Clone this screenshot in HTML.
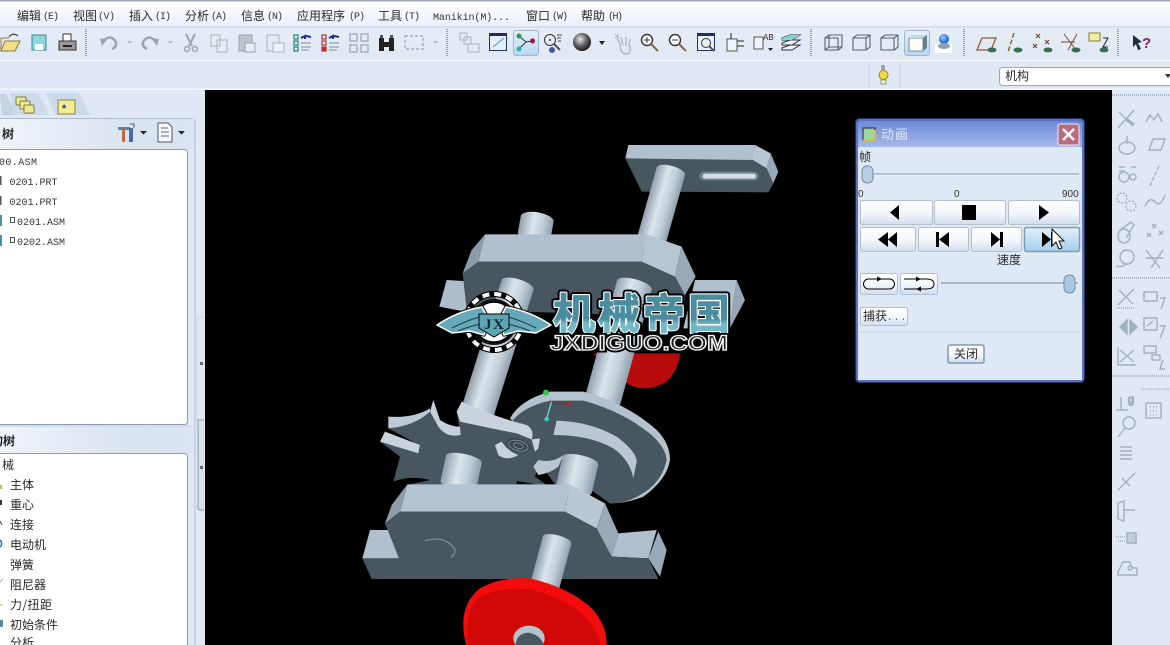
<!DOCTYPE html>
<html><head><meta charset="utf-8"><style>
html,body{margin:0;padding:0;background:#dfe8f4;width:1170px;height:645px;overflow:hidden}
svg{display:block}
text{font-family:"Liberation Sans","WenQuanYi Zen Hei","Noto Sans CJK SC",sans-serif;font-size:12px;fill:#222}
.m{font-family:"Liberation Mono","WenQuanYi Zen Hei",monospace;font-size:10px;fill:#333}
.z{font-family:"WenQuanYi Zen Hei","Noto Sans CJK SC",sans-serif;font-size:12px;fill:#2a2a2a}
</style></head><body>
<svg width="1170" height="645" viewBox="0 0 1170 645" xmlns="http://www.w3.org/2000/svg">
<defs>
<linearGradient id="menu" x1="0" y1="0" x2="0" y2="1"><stop offset="0" stop-color="#fff"/><stop offset="1" stop-color="#e9eff8"/></linearGradient>
<linearGradient id="tb" x1="0" y1="0" x2="0" y2="1"><stop offset="0" stop-color="#e6edf6"/><stop offset="1" stop-color="#dfe8f3"/></linearGradient>
<linearGradient id="hdr" x1="0" y1="0" x2="1" y2="0"><stop offset="0" stop-color="#eef3f9"/><stop offset=".7" stop-color="#d8e3f0"/><stop offset="1" stop-color="#dbe5f1"/></linearGradient>
<linearGradient id="shaft" x1="0" y1="0" x2="1" y2="0"><stop offset="0" stop-color="#909fae"/><stop offset=".4" stop-color="#dde5ec"/><stop offset=".7" stop-color="#c0cdd8"/><stop offset="1" stop-color="#8f9fae"/></linearGradient>
<linearGradient id="btn" x1="0" y1="0" x2="0" y2="1"><stop offset="0" stop-color="#fff"/><stop offset=".55" stop-color="#f2f6fb"/><stop offset="1" stop-color="#cfdcec"/></linearGradient>
<linearGradient id="btnh" x1="0" y1="0" x2="0" y2="1"><stop offset="0" stop-color="#e4f0fb"/><stop offset="1" stop-color="#a5cdec"/></linearGradient>
<linearGradient id="title" x1="0" y1="0" x2="0" y2="1"><stop offset="0" stop-color="#6f8ad6"/><stop offset=".5" stop-color="#8ba3e2"/><stop offset="1" stop-color="#a8bbe8"/></linearGradient>
<linearGradient id="sel" x1="0" y1="0" x2="0" y2="1"><stop offset="0" stop-color="#e8f1f9"/><stop offset="1" stop-color="#b9d7f0"/></linearGradient>
<linearGradient id="lt" x1="0" y1="0" x2="0" y2="1"><stop offset="0" stop-color="#4a8da0"/><stop offset=".62" stop-color="#4a8da0"/><stop offset=".7" stop-color="#74b8c6"/><stop offset="1" stop-color="#74b8c6"/></linearGradient>
<radialGradient id="ball" cx=".4" cy=".35" r=".7"><stop offset="0" stop-color="#e8e8e8"/><stop offset=".5" stop-color="#666"/><stop offset="1" stop-color="#111"/></radialGradient>
<radialGradient id="bb" cx=".4" cy=".35" r=".7"><stop offset="0" stop-color="#8cc8ff"/><stop offset="1" stop-color="#0a50c8"/></radialGradient>
</defs>

<!-- chrome -->
<rect width="1170" height="645" fill="#dfe8f4"/>
<rect y="0" width="1170" height="1.5" fill="#9aa3b8"/>
<rect y="1.5" width="1170" height="25" fill="url(#menu)"/>
<rect y="26.5" width="1170" height="1" fill="#c6d2e0"/>
<rect y="27.5" width="1170" height="32" fill="url(#tb)"/>
<rect y="60" width="1170" height="1" fill="#f8fbff"/>
<rect y="61" width="1170" height="28" fill="#dfe8f4"/>
<rect y="88.5" width="1170" height="1.5" fill="#f4f7fb"/>

<!-- menu -->
<g class="z">
<text class="z" x="-4" y="20">)</text>
<text class="z" x="17" y="20" textLength="24">编辑</text><text class="m" x="43" y="19" textLength="16">(E)</text>
<text class="z" x="73" y="20" textLength="24">视图</text><text class="m" x="98" y="19" textLength="17">(V)</text>
<text class="z" x="129" y="20" textLength="24">插入</text><text class="m" x="155" y="19" textLength="16">(I)</text>
<text class="z" x="185" y="20" textLength="24">分析</text><text class="m" x="211" y="19" textLength="16">(A)</text>
<text class="z" x="241" y="20" textLength="24">信息</text><text class="m" x="267" y="19" textLength="16">(N)</text>
<text class="z" x="297" y="20" textLength="48">应用程序</text><text class="m" x="349" y="19" textLength="16">(P)</text>
<text class="z" x="378" y="20" textLength="24">工具</text><text class="m" x="404" y="19" textLength="16">(T)</text>
<text class="m" x="433" y="20" textLength="77">Manikin(M)...</text>
<text class="z" x="526" y="20" textLength="24">窗口</text><text class="m" x="552" y="19" textLength="16">(W)</text>
<text class="z" x="581" y="20" textLength="24">帮助</text><text class="m" x="608" y="19" textLength="15">(H)</text>
</g>

<!-- toolbar separators -->
<g stroke="#8fa0ae" stroke-dasharray="1 1" stroke-width="2" fill="none">
<path d="M86 29V56M447 29V56M811 29V56M964 29V56M1118 29V56"/>
</g>
<!-- highlighted tool bg -->
<rect x="513.5" y="30.5" width="25" height="25" rx="3" fill="url(#sel)" stroke="#a3b6c9"/>
<rect x="904.5" y="30.5" width="25" height="25" rx="3" fill="url(#sel)" stroke="#a3b6c9"/>

<!-- open -->
<path d="M1 51L5 41H20L15 51Z" fill="#f4de8a" stroke="#8a7b3c"/><path d="M1 51V38H9" fill="none" stroke="#8a7b3c"/>
<path d="M9 37Q13 32 18 36" stroke="#222" fill="none"/>
<!-- save -->
<rect x="32" y="35" width="14" height="15" fill="#8fd6dc" stroke="#3b8a92"/><rect x="35" y="44" width="8" height="6" fill="#fff"/>
<!-- print -->
<rect x="63" y="34" width="8" height="8" fill="#fff" stroke="#333"/><rect x="59" y="41" width="17" height="9" fill="#999" stroke="#333"/><rect x="63" y="45" width="9" height="2" fill="#222"/>
<!-- undo redo -->
<path d="M103 42Q110 33 116 42Q117 47 112 49" fill="none" stroke="#9aa4ae" stroke-width="2.5"/><path d="M100 39L108 38L102 46Z" fill="#9aa4ae"/>
<path d="M156 42Q149 33 143 42Q142 47 147 49" fill="none" stroke="#9aa4ae" stroke-width="2.5"/><path d="M159 39L151 38L157 46Z" fill="#9aa4ae"/>
<path d="M127 41h5l-2.5 3zM168 41h5l-2.5 3zM433 41h5l-2.5 3z" fill="#b4bec8"/>
<!-- cut -->
<path d="M186 34L192 46M195 34L189 46" stroke="#98a4ae" stroke-width="2" fill="none"/><circle cx="187" cy="49" r="2.5" fill="none" stroke="#98a4ae" stroke-width="1.5"/><circle cx="195" cy="49" r="2.5" fill="none" stroke="#98a4ae" stroke-width="1.5"/>
<!-- copy -->
<path d="M211 35h9v11h-9zM217 40h10v12h-10z" fill="#e6ebf1" stroke="#a8b2bc"/>
<!-- paste -->
<rect x="239" y="35" width="13" height="16" fill="#bcc5cd" stroke="#97a2ac"/><rect x="245" y="43" width="10" height="9" fill="#e8ecf2" stroke="#97a2ac"/>
<rect x="267" y="35" width="12" height="16" fill="#e4e9f0" stroke="#aab4be"/><rect x="273" y="43" width="11" height="9" fill="#eef1f6" stroke="#aab4be"/>
<!-- regen list icons -->
<g fill="none" stroke-width="1.3">
<rect x="294" y="35" width="4" height="4" stroke="#2c8a78"/><rect x="294" y="41" width="4" height="4" stroke="#2c8a78"/><rect x="294" y="47" width="4" height="4" stroke="#2c8a78"/>
<path d="M301 43h10M301 47h10M301 50h8" stroke="#8fa0ae"/><path d="M301 38l4-2 0 3M306 36l5 1" stroke="#1a2f80" stroke-width="2"/>
<rect x="322" y="35" width="4" height="4" stroke="#b04040"/><rect x="322" y="41" width="4" height="4" stroke="#b04040"/><rect x="322" y="47" width="4" height="4" fill="#d02030" stroke="#b04040"/>
<path d="M329 43h10M329 47h10M329 50h8" stroke="#8fa0ae"/><path d="M329 38l4-2 0 3M334 36l5 1" stroke="#1a2f80" stroke-width="2"/>
</g>
<!-- grid faded -->
<path d="M350 34h7v7h-7zM361 34h7v7h-7zM350 45h7v7h-7zM361 45h7v7h-7z" fill="none" stroke="#a9b3bc" stroke-width="1.5"/>
<!-- binoculars -->
<path d="M379 38h5v13h-5zM389 38h5v13h-5zM384 42h5v5h-5z" fill="#222"/><path d="M380 35h3v3h-3zM390 35h3v3h-3z" fill="#555"/>
<!-- dashed rect -->
<rect x="405" y="36" width="18" height="13" fill="none" stroke="#a6b1bb" stroke-width="1.5" stroke-dasharray="3 2"/>
<!-- group faded -->
<path d="M460 33h7v7h-7zM464 37h7v7h-7zM468 44h11v8h-11z" fill="none" stroke="#a9b3bc"/>
<!-- named view -->
<rect x="489.5" y="33.5" width="17" height="17" fill="#e6eef8" stroke="#1e3060"/><rect x="489" y="33" width="18" height="3" fill="#1e3060"/><path d="M493 47L504 38" stroke="#4a90b0"/>
<!-- mech connect -->
<g stroke="#333" fill="none"><path d="M519 36L526 42L519 49M526 42L532 41"/></g>
<circle cx="519" cy="36" r="2.5" fill="#2a9a50"/><circle cx="519" cy="49" r="2.5" fill="#2ab0b0"/><circle cx="532.5" cy="41" r="2.5" fill="#a01840"/>
<!-- view icon -->
<circle cx="550" cy="40" r="5.5" fill="none" stroke="#333"/><circle cx="550" cy="40" r="1" fill="#333"/><path d="M554 44l6 6" stroke="#555" stroke-width="2"/><circle cx="552" cy="50" r="3" fill="#3a5aa0"/><path d="M557 35h5M557 38h4M558 41h3" stroke="#444"/>
<!-- sphere -->
<circle cx="582" cy="42" r="9" fill="url(#ball)"/><path d="M599 41h6l-3 4z" fill="#222"/>
<!-- hand -->
<path d="M617 38l4 8M621 37l2 8M626 37l0 9M630 39l-1 8M620 46q1 8 6 8q5 0 4-8" fill="none" stroke="#adb8c2" stroke-width="1.4"/><path d="M615 34l4 4M619 34l-4 4" stroke="#adb8c2"/>
<!-- zoom in/out -->
<circle cx="647" cy="40" r="5.5" fill="#fff" stroke="#333" stroke-width="1.4"/><path d="M644 40h6M647 37v6" stroke="#333"/><path d="M651 44l7 7" stroke="#7a6a50" stroke-width="2"/>
<circle cx="675" cy="40" r="5.5" fill="#fff" stroke="#333" stroke-width="1.4"/><path d="M672 40h6" stroke="#333"/><path d="M679 44l7 7" stroke="#7a6a50" stroke-width="2"/>
<!-- refit -->
<rect x="697.5" y="33.5" width="17" height="17" fill="#eaf0f8" stroke="#1e3060"/><rect x="697" y="33" width="18" height="3" fill="#1e3060"/><circle cx="706" cy="43" r="4.5" fill="none" stroke="#333"/><path d="M709 46l5 5" stroke="#555" stroke-width="2"/>
<!-- orient -->
<path d="M727 39h10v12h-10z" fill="#eef3f8" stroke="#555"/><path d="M731 33v6M744 41h-7M744 46h-7" stroke="#222"/>
<!-- saved view -->
<path d="M754 37h9v12h-9z" fill="#eef3f8" stroke="#555"/><text x="763" y="40" class="m" style="font-size:9px">AB</text><path d="M768 48h5l-2.5 3z" fill="#222"/>
<!-- layers -->
<path d="M782 38l8-3 10 0-8 5h-10zM782 43l8-3h10l-8 5h-10zM782 48l8-3h10l-8 5h-10z" fill="#e8f4f4" stroke="#334"/><path d="M782 38l8-3 10 0-8 5h-10z" fill="#7fd8d0"/>

<!-- box views -->
<g fill="none" stroke="#556370" stroke-width="1.1">
<path d="M825 38h13v12h-13zM825 38l4-3h13v12l-4 3M829 35v12h13M829 47l-4 3"/>
<path d="M853 38h13v12h-13zM853 38l4-3h13v12l-4 3M866 38l4-3"/>
<path d="M881 38h13v12h-13zM881 38l4-3h13v12l-4 3M894 38l4-3"/>
</g>
<path d="M909 38h14v13h-14z" fill="#fff" stroke="#6a8a9a"/><path d="M909 38l4-3h14l-4 3z" fill="#b8dde8"/><path d="M923 38l4-3v13l-4 3z" fill="#6a8088"/>
<!-- named blue -->
<circle cx="944" cy="39" r="5" fill="url(#bb)"/><path d="M935 44h17v9h-17z" fill="#fff"/><ellipse cx="944" cy="46" rx="6" ry="3" fill="#8fa0ae"/>
<!-- datum toggles -->
<path d="M977 50l5-12h14l-5 12z" fill="none" stroke="#8a5a3a" stroke-width="1.3"/>
<path d="M1014 33l-6 19" stroke="#8a5a3a" stroke-width="1.4" stroke-dasharray="5 2"/>
<path d="M1036 34l4 4M1040 34l-4 4M1033 44l4 4M1037 44l-4 4M1045 40l4 4M1049 40l-4 4" stroke="#6a3a30"/>
<path d="M1064 34l12 16M1077 34l-9 16M1061 42h14" stroke="#7a4a3a"/>
<rect x="1089" y="33" width="11" height="8" fill="#f4f0a0" stroke="#8a7a40"/><path d="M1103 38h5l-5 9h5" stroke="#222" fill="none"/>
<g fill="#3a6a58"><ellipse cx="992" cy="50" rx="4.5" ry="2.5"/><ellipse cx="1018" cy="50" rx="4.5" ry="2.5"/><ellipse cx="1048" cy="50" rx="4.5" ry="2.5"/><ellipse cx="1076" cy="50" rx="4.5" ry="2.5"/><ellipse cx="1104" cy="50" rx="4.5" ry="2.5"/></g>
<!-- help -->
<path d="M1133 35l9 7-4 1 3 6-3 1-2-6-3 3z" fill="#1e2c3c"/><text x="1142" y="48" style="font-size:15px;font-weight:bold;fill:#8a1a70">?</text>

<!-- status bar row -->
<path d="M869 63V88M900 63V88" stroke="#c4cfdc"/>
<rect x="881" y="65" width="4" height="5" fill="#b89ab0"/><circle cx="883.5" cy="75" r="4.5" fill="#f0dc40" stroke="#8a8a30"/><rect x="881" y="80" width="5" height="4" fill="#f4f4c8" stroke="#6a7a50" stroke-width=".7"/>
<rect x="999.5" y="67.5" width="180" height="18" rx="3" fill="#fff" stroke="#9aa8b8"/>
<text class="z" x="1005" y="80" textLength="24">机构</text>
<path d="M1165 74h6l-3 4z" fill="#333"/>

<!-- left panel -->
<path d="M2 115L0 94H6L18 115Z" fill="#c6d3e2"/>
<path d="M10 93H34Q38 93 42 100L49 115H14Z" fill="#cddaea"/>
<path d="M46 93H76Q80 93 83 100L90 115H55Z" fill="#cddaea"/>
<g stroke="#7a7a40"><rect x="16" y="97" width="10" height="8" rx="1" fill="#f0e890"/><rect x="20" y="101" width="10" height="8" rx="1" fill="#f0e890"/><rect x="24" y="105" width="10" height="8" rx="1" fill="#f0e890"/></g>
<rect x="58" y="100" width="17" height="14" fill="#f4ec90" stroke="#8a8240"/><text x="62" y="112" style="font-size:11px;fill:#223a90;font-weight:bold">*</text>
<path d="M0 118.5H190Q195 118.5 195 123V645" fill="none" stroke="#aebbca"/>
<rect x="0" y="119" width="194" height="30" fill="url(#hdr)"/>
<rect x="0" y="427" width="194" height="26" fill="url(#hdr)"/>
<path d="M0 426H194" stroke="#c5d1df"/>
<text x="2" y="138" style="font-weight:bold;font-size:12px;font-family:'WenQuanYi Zen Hei','Noto Sans CJK SC',sans-serif">树</text>
<text x="-9" y="445" style="font-weight:bold;font-size:12px;font-family:'WenQuanYi Zen Hei','Noto Sans CJK SC',sans-serif">构树</text>
<!-- header icons -->
<path d="M118 127h12v3h-12z" fill="#6a8090"/><rect x="122" y="129" width="3" height="13" fill="#c06a40"/><rect x="129" y="128" width="4" height="14" fill="#4a6aa8"/><path d="M130 124l4 0 0 4" fill="none" stroke="#556"/>
<path d="M140 131h7l-3.500 3.500zM178 131h7l-3.500 3.500z" fill="#222"/>
<path d="M158 123h10l4 4v15h-14z" fill="#f4f6f8" stroke="#556"/><path d="M161 128h7M161 132h8M161 136h8" stroke="#668"/>
<!-- lists -->
<rect x="-3" y="149.500" width="190.500" height="275" rx="3" fill="#fff" stroke="#8e9cac"/>
<rect x="-3" y="453.500" width="190.500" height="200" rx="3" fill="#fff" stroke="#8e9cac"/>
<g class="m">
<text class="m" x="-1" y="165" textLength="38">00.ASM</text>
<text class="m" x="9.500" y="185" textLength="48">0201.PRT</text>
<text class="m" x="9.500" y="205" textLength="48">0201.PRT</text>
<text class="m" x="17" y="225" textLength="48">0201.ASM</text>
<text class="m" x="17" y="245" textLength="48">0202.ASM</text>
</g>
<path d="M0 176h1.500v9H0zM0 196h1.500v9H0z" fill="#555"/>
<path d="M0 215h2v11H0zM0 235h2v11H0z" fill="#4a90a8"/>
<path d="M10.500 217.500h4v5h-4zM10.500 237.500h4v5h-4z" fill="none" stroke="#555"/>
<text class="z" x="2" y="469">械</text>
<text class="z" x="10" y="489" textLength="24">主体</text>
<text class="z" x="10" y="509" textLength="24">重心</text>
<text class="z" x="10" y="529" textLength="24">连接</text>
<text class="z" x="10" y="549" textLength="36">电动机</text>
<text class="z" x="10" y="569" textLength="24">弹簧</text>
<text class="z" x="10" y="589" textLength="36">阻尼器</text>
<text class="z" x="10" y="609" textLength="42">力/扭距</text>
<text class="z" x="10" y="629" textLength="48">初始条件</text>
<text class="z" x="10" y="647" textLength="24">分析</text>
<path d="M0 485h2v4H0z" fill="#c8b860"/><path d="M0 500h2v5H0z" fill="#333"/><path d="M0 521l2 4" stroke="#444"/><path d="M0 540a3 4 0 0 1 0 7" stroke="#2a70b0" fill="none" stroke-width="1.500"/><path d="M0 582l3-3" stroke="#aaa"/><path d="M0 605h3" stroke="#c8b060"/><path d="M0 620h3v7H0z" fill="#5a8a98"/>
<!-- sash -->
<path d="M204 317H200Q197 317 197 321V420" fill="none" stroke="#ccd7e4"/>
<path d="M204 420H198V508Q198 510 200 510H204" fill="#d6e0ec" stroke="#8d9bab"/>
<rect x="200" y="362" width="3" height="3" fill="#667"/><rect x="200" y="466" width="3" height="3" fill="#667"/>

<!-- viewport -->
<rect x="205" y="90" width="907" height="555" fill="#000"/>
<clipPath id="vp"><rect x="205" y="90" width="907" height="555"/></clipPath>

<g clip-path="url(#vp)">
<!-- UPPER MODEL: coordinates are 3x, offset 350,130 -->
<g transform="translate(350,130) scale(.33333)">
<!-- back red -->
<path d="M730,670 L990,670 Q985,720 950,755 Q900,785 850,770 Q790,740 730,670Z" fill="#b80c0c"/>
<!-- stub -->
<rect x="-50" y="0" width="100" height="90" rx="50" ry="20" fill="url(#shaft)" transform="translate(565,247) rotate(10)"/>
<!-- bracket -->
<path d="M826,85 L1205,88 L1250,115 L1270,160 L1255,187 L875,185Z" fill="#47565f"/>
<path d="M835,45 L1215,45 L1205,90 L826,85Z" fill="#b1c0ce"/>
<path d="M1215,45 L1262,70 L1250,115 L1205,88Z" fill="#b8c6d3"/>
<path d="M1262,70 L1285,125 L1270,160 L1250,115Z" fill="#98a9b7"/>
<rect x="1048" y="125" width="178" height="26" rx="13" fill="#6f808c"/>
<rect x="1058" y="131" width="160" height="15" rx="7" fill="#d3dce4"/>
<!-- top shaft -->
<rect x="-44" y="0" width="88" height="260" rx="44" ry="16" fill="url(#shaft)" transform="translate(967,108) rotate(15.700)"/>
<!-- flange tabs -->
<path d="M290,450 L370,455 L345,545 L268,530Z" fill="#aebdcb"/>
<path d="M1035,450 L1160,450 L1140,595 L1000,595Z" fill="#b1c0ce"/>
<path d="M1160,450 L1185,510 L1140,595Z" fill="#96a7b5"/>
<!-- middle block -->
<path d="M385,395 L875,395 L975,440 L1005,495 L1000,560 L350,540 L338,430Z" fill="#47565f"/>
<path d="M405,313 L890,313 L875,395 L385,395Z" fill="#b1c0ce"/>
<path d="M405,313 L385,395 L338,430 L365,360Z" fill="#8b9caa"/>
<path d="M890,313 L995,350 L975,440 L875,395Z" fill="#b8c6d3"/>
<path d="M995,350 L1037,440 L1005,495 L975,440Z" fill="#98a9b7"/>
<!-- long shafts -->
<rect x="-50" y="0" width="100" height="440" rx="50" ry="18" fill="url(#shaft)" transform="translate(508,448) rotate(17.500)"/>
<rect x="-54" y="0" width="108" height="420" rx="54" ry="18" fill="url(#shaft)" transform="translate(858,448) rotate(15.400)"/>
</g>

<!-- LOWER MODEL: coordinates are 3x, offset 350,380 -->
<g transform="translate(350,380) scale(.33333)">
<!-- cam -->
<path d="M480,115 Q510,60 600,35 L700,35 Q830,70 920,150 Q960,190 960,240 Q950,300 880,350 Q830,370 780,370 L700,300 L560,200Z" fill="#b4c2cf"/>
<path d="M485,125 Q520,80 600,62 L700,62 Q820,95 905,165 Q948,205 950,240 Q935,310 870,345 Q830,370 780,370 L730,335 L620,320 L555,230Z" fill="#47565f"/>
<path d="M610,165 L620,122 Q720,125 800,170 Q860,215 860,245 L850,295 Q840,240 790,205 Q720,165 610,165Z" fill="#bac7d3"/>
<!-- gizmo -->
<path d="M605,65 L590,115" stroke="#5adfe0" stroke-width="4"/><path d="M605,70 H660" stroke="#a02020" stroke-width="4"/>
<circle cx="588" cy="38" r="9" fill="#30c840"/><circle cx="590" cy="117" r="7" fill="#40c8c8"/><circle cx="658" cy="72" r="5" fill="#c02020"/>
<!-- star dark -->
<path d="M115,145 Q190,140 240,95 L250,60 L270,125 Q300,170 332,165 L320,95 L500,160 L545,178 L570,240 L555,290 L590,315 L170,315 L240,300 Q180,285 130,305 L150,230 L90,185 L205,220 L210,200 L180,180Z" fill="#47565f"/>
<!-- star rims -->
<path d="M115,110 Q190,115 240,85 L240,95 Q190,140 115,145Z" fill="#bccad6"/>
<path d="M250,60 L270,120 Q300,140 330,140 L332,165 Q290,175 265,140 L240,95Z" fill="#c4d0db"/>
<path d="M320,95 L335,65 Q430,110 530,135 Q555,150 545,178 L500,160 Q420,145 330,125Z" fill="#c8d3dd"/>
<path d="M90,185 L105,155 L210,195 L205,220Z" fill="#c8d3dd"/>
<!-- hole -->
<path d="M435,195 L455,185 Q475,215 505,225 Q470,245 445,225Z" fill="#c8d3dd"/>
<ellipse cx="505" cy="197" rx="38" ry="20" fill="#3a474f" transform="rotate(15 505 197)"/>
<ellipse cx="505" cy="197" rx="30" ry="15" fill="none" stroke="#93a2ae" stroke-width="2" transform="rotate(15 505 197)"/>
<ellipse cx="505" cy="197" rx="15" ry="8" fill="none" stroke="#93a2ae" stroke-width="2" transform="rotate(15 505 197)"/>
<path d="M545,178 L570,175 L565,205 L555,215Z" fill="#c8d3dd"/>
<!-- small crescent -->
<path d="M550,260 L565,240 Q610,250 640,225 L625,260 Q600,280 565,285Z" fill="#bac7d3"/>
<path d="M500,303 L560,313 L500,313Z" fill="#000"/>
<!-- lower shafts -->
<rect x="-55" y="0" width="110" height="110" rx="55" ry="16" fill="url(#shaft)" transform="translate(345,222) rotate(12)"/>
<rect x="-55" y="0" width="110" height="120" rx="55" ry="16" fill="url(#shaft)" transform="translate(695,226) rotate(13)"/>
<!-- lower block -->
<path d="M60,450 L125,450 L147,535 L37,535Z" fill="#b1c0ce"/>
<path d="M805,460 L920,450 L895,535 L785,530Z" fill="#b1c0ce"/>
<path d="M925,455 L950,510 L930,590 L895,535Z" fill="#98a9b7"/>
<path d="M150,395 L645,395 L740,445 L785,530 L895,535 L925,597 L65,597 L37,535 L147,535 L105,430Z" fill="#47565f"/>
<path d="M172,313 L660,313 L645,395 L150,395Z" fill="#b4c3d1"/>
<path d="M172,313 L150,395 L105,430 L125,375Z" fill="#8b9caa"/>
<path d="M660,313 L765,370 L740,445 L645,395Z" fill="#bac8d5"/>
<path d="M765,370 L805,460 L785,530 L740,445Z" fill="#98a9b7"/>
<path d="M225,482 Q290,465 315,510 Q315,525 303,532" fill="none" stroke="#7f8e9a" stroke-width="4"/>
<!-- bottom shaft -->
<rect x="-44" y="0" width="88" height="175" rx="44" ry="14" fill="url(#shaft)" transform="translate(625,466) rotate(15)"/>
<!-- red wheel -->
<path d="M340,720 Q345,660 390,625 Q450,590 540,595 Q650,620 720,680 Q770,730 770,795 L350,800 Q338,760 340,720Z" fill="#f20c0c"/>
<path d="M375,660 Q440,618 540,628 Q640,652 700,705 Q745,750 752,800 L355,800 Q342,720 375,660Z" fill="#d20808"/>
<ellipse cx="537" cy="775" rx="47" ry="38" fill="#b4c3d0"/>
<path d="M497,800 Q497,760 535,758 Q575,765 582,800Z" fill="#47565f"/>
</g>
</g>

<!-- logo -->
<g>
<circle cx="494" cy="322" r="28" fill="none" stroke="#000" stroke-width="6"/>
<circle cx="494" cy="322" r="28" fill="none" stroke="#fff" stroke-width="4" stroke-dasharray="7 5"/>
<circle cx="494" cy="322" r="23" fill="#111"/>
<circle cx="494" cy="322" r="20" fill="#fff" stroke="#000" stroke-width="1.500"/>
<path d="M437 325Q458 311 482 307L489 320L484 335L470 331L452 333Z" fill="#66aaba" stroke="#000" stroke-width="3.500" stroke-linejoin="round"/>
<path d="M437 325Q458 311 482 307L489 320L484 335L470 331L452 333Z" fill="#66aaba" stroke="#fff" stroke-width="1.500" stroke-linejoin="round"/>
<path d="M551 325Q530 311 506 307L499 320L504 335L518 331L536 333Z" fill="#66aaba" stroke="#000" stroke-width="3.500" stroke-linejoin="round"/>
<path d="M551 325Q530 311 506 307L499 320L504 335L518 331L536 333Z" fill="#66aaba" stroke="#fff" stroke-width="1.500" stroke-linejoin="round"/>
<path d="M452 328Q468 320 480 317M458 331Q470 326 481 324M536 328Q520 320 508 317M530 331Q518 326 507 324" stroke="#1d3c48" fill="none"/>
<path d="M479 314H509V328L494 337L479 328Z" fill="#5da4b4" stroke="#000"/>
<text x="484" y="329" textLength="20" style="font-family:'Liberation Serif',serif;font-size:15px;font-weight:bold;fill:#0d2630">JX</text>
<text x="553" y="329" textLength="177" style="font-family:'WenQuanYi Zen Hei','Noto Sans CJK SC',sans-serif;font-size:42px;font-weight:bold;fill:#000;stroke:#000;stroke-width:7;stroke-linejoin:round">机械帝国</text>
<text x="553" y="329" textLength="177" style="font-family:'WenQuanYi Zen Hei','Noto Sans CJK SC',sans-serif;font-size:42px;font-weight:bold;fill:#fff;stroke:#fff;stroke-width:3;stroke-linejoin:round">机械帝国</text>
<text x="553" y="329" textLength="177" style="font-family:'WenQuanYi Zen Hei','Noto Sans CJK SC',sans-serif;font-size:42px;font-weight:bold;fill:url(#lt);stroke:url(#lt);stroke-width:.8;stroke-linejoin:round">机械帝国</text>
<text x="550" y="350" textLength="178" lengthAdjust="spacingAndGlyphs" style="font-family:'Liberation Sans',sans-serif;font-size:21px;font-weight:bold;fill:#111;stroke:#000;stroke-width:5;paint-order:stroke">JXDIGUO.COM</text>
<text x="550" y="350" textLength="178" lengthAdjust="spacingAndGlyphs" style="font-family:'Liberation Sans',sans-serif;font-size:21px;font-weight:bold;fill:#222;stroke:#f4f6f8;stroke-width:1.300">JXDIGUO.COM</text>
</g>

<!-- dialog -->
<rect x="855.500" y="118.500" width="229" height="264" rx="4" fill="#5a72c4" stroke="#22305a"/>
<rect x="858" y="121" width="224" height="27" rx="3" fill="url(#title)"/>
<rect x="858" y="147" width="224" height="233" fill="#dfe8f5"/>
<rect x="863" y="128" width="12" height="12" fill="#9ed8a0" stroke="#223"/><path d="M863 140h12v-10" fill="none" stroke="#e0c020" stroke-width="1.500"/>
<text class="z" x="881" y="139" textLength="27" style="fill:#e4eafa;font-size:13px">动画</text>
<rect x="1058" y="124" width="21" height="21" rx="2" fill="#bd6a7c" stroke="#e6ecf8"/><path d="M1063 129l11 11M1074 129l-11 11" stroke="#fff" stroke-width="2.500"/>
<text class="z" x="859" y="161">帧</text>
<path d="M868 174H1079" stroke="#8592a4"/><path d="M868 175H1079" stroke="#f4f7fb"/>
<rect x="862" y="166" width="11" height="17" rx="5" fill="#b4cfe6" stroke="#7a8aa0"/>
<text class="m" x="858" y="197" style="font-size:10px;font-family:'Liberation Sans'">0</text>
<text class="m" x="954" y="197" style="font-size:10px;font-family:'Liberation Sans'">0</text>
<text class="m" x="1062" y="197" style="font-size:10px;font-family:'Liberation Sans'">900</text>
<g fill="url(#btn)" stroke="#b2bfcf">
<rect x="860.500" y="200.500" width="72" height="24" rx="2"/><rect x="934.500" y="200.500" width="71" height="24" rx="2"/><rect x="1008.500" y="200.500" width="71" height="24" rx="2"/>
<rect x="860.500" y="227.500" width="55" height="24" rx="2"/><rect x="918.500" y="227.500" width="50" height="24" rx="2"/><rect x="971.500" y="227.500" width="50" height="24" rx="2"/>
</g>
<rect x="1024.500" y="227.500" width="55" height="24" rx="2" fill="url(#btnh)" stroke="#7c9cb4" stroke-width="1.500"/>
<g fill="#000">
<path d="M899 205V220L890 212.500Z"/><rect x="962" y="205" width="14" height="15"/><path d="M1039 205V220L1049 212.500Z"/>
<path d="M888 232V247L878 239.500ZM897 232V247L888 239.500Z"/>
<path d="M936 232H939V247H936ZM949 232V247L939 239.500Z"/>
<path d="M991 232V247L1000 239.500ZM1000 232H1003V247H1000Z"/>
<path d="M1042 232V247L1051 239.500ZM1051 232L1060 239.500L1051 247Z"/>
</g>
<path d="M1052 229V246L1056 242L1059 249L1062 248L1059 241L1064 241Z" fill="#fff" stroke="#111"/>
<text class="z" x="997" y="264" textLength="24">速度</text>
<rect x="860.500" y="273.500" width="37" height="21" rx="2" fill="url(#btn)" stroke="#b2bfcf"/>
<rect x="900.500" y="273.500" width="37" height="21" rx="2" fill="url(#btn)" stroke="#b2bfcf"/>
<rect x="863.500" y="279" width="31" height="10" rx="5" fill="none" stroke="#000"/>
<path d="M877 276.500V281.500L882 279Z" fill="#000"/>
<path d="M904 279H926Q934 279 934 284Q934 289 926 289H904" fill="none" stroke="#000"/><path d="M916 276.500V281.500L921 279ZM921 286.500V291.500L916 289Z" fill="#000"/>
<path d="M941 283H1078" stroke="#99a6b6" stroke-width="1.500"/>
<rect x="1064" y="275" width="11" height="18" rx="5" fill="#a9c8e4" stroke="#7c8ca2"/>
<rect x="860.500" y="307.500" width="47" height="18" rx="2" fill="url(#btn)" stroke="#b2bfcf"/>
<text class="z" x="863" y="320">捕获</text><text class="z" x="888" y="320" textLength="17" style="fill:#667">...</text>
<path d="M860 332H1080" stroke="#c2cedc"/>
<rect x="948" y="345" width="36" height="18" rx="2" fill="url(#btn)" stroke="#7d9aae" stroke-width="1.500"/>
<text class="z" x="954" y="358" textLength="24">关闭</text>

<!-- right toolbar -->
<rect x="1112" y="90" width="58" height="555" fill="#dfe8f4"/>
<g stroke="#a9b7c6" stroke-dasharray="1 1" fill="none" stroke-width="2">
<path d="M1112 95H1170M1112 278H1170M1112 376H1170"/><path d="M1141 389H1170" stroke-width="1.500"/>
</g>
<g fill="none" stroke="#a3b0be" stroke-width="1.400">
<path d="M1119 112L1133 126M1134 110L1118 128"/><path d="M1126 119l8 6" stroke-width="3"/>
<path d="M1146 122l4-7 4 5 4-6 4 8"/>
<ellipse cx="1127" cy="148" rx="8" ry="6"/><path d="M1127 136v8"/>
<path d="M1149 150l4-11h12l-4 11z"/>
<circle cx="1124" cy="177" r="5"/><circle cx="1133" cy="177" r="3"/><path d="M1119 167h6M1131 167h5M1119 171h5"/>
<path d="M1159 166l-9 20" stroke-dasharray="4 2"/>
<circle cx="1122" cy="198" r="5" stroke-dasharray="2 1.500"/><circle cx="1131" cy="206" r="5" stroke-dasharray="2 1.500"/>
<path d="M1145 206q5-10 10-4t10-7"/>
<ellipse cx="1124" cy="236" rx="6" ry="7"/><path d="M1120 230l11-8 3 3-8 13"/>
<path d="M1152 224l4 4M1156 224l-4 4M1147 233l4 4M1151 233l-4 4M1159 231l4 4M1163 231l-4 4"/>
<circle cx="1127" cy="257" r="7"/><path d="M1116 266q6 2 10-2"/>
<path d="M1146 250l14 18M1163 250l-12 18M1146 258h17"/>
<path d="M1119 290l14 14M1134 289l-16 16M1119 298v.1"/><path d="M1117 308h18" stroke-dasharray="1 1"/>
<rect x="1144" y="292" width="13" height="9"/><path d="M1160 298h5l-4 11"/>
<path d="M1127 320l-7 7 7 7z" fill="#a3b0be"/><path d="M1130 320l7 7-7 7z" fill="#a3b0be"/>
<rect x="1144" y="318" width="13" height="12"/><path d="M1147 326l6-5M1160 326h5l-5 12"/>
<path d="M1118 347v18h18"/><path d="M1120 362l14-12M1120 350l14 12"/>
<path d="M1144 346h12v7h-12zM1152 355h8v5h-8zM1163 360l-3 9h5"/>
<path d="M1121 397V410M1116 410h12"/><text x="1128" y="403" style="font-size:11px;fill:#8f9dac">g</text>
<rect x="1146" y="403" width="15" height="15"/><path d="M1150 407h7M1150 411h7M1150 415h7" stroke-dasharray="1 2"/>
<circle cx="1129" cy="423" r="6"/><path d="M1125 428l-7 9"/>
<path d="M1120 447h12M1120 451h12M1120 455h12M1120 459h12" stroke-width="1.600"/>
<path d="M1118 490l17-17M1122 478l8 8"/>
<path d="M1118 503v16M1118 503l6-2v20l-6-2M1124 510h11"/>
<path d="M1127 533h9v10h-9z" fill="#c4ced9"/><path d="M1116 537h9M1118 541h7" stroke-dasharray="1 1"/>
<path d="M1118 572l5-10h7l2 6h5v7h-19z"/><circle cx="1130" cy="568" r="2"/>
</g>
</svg>
</body></html>
